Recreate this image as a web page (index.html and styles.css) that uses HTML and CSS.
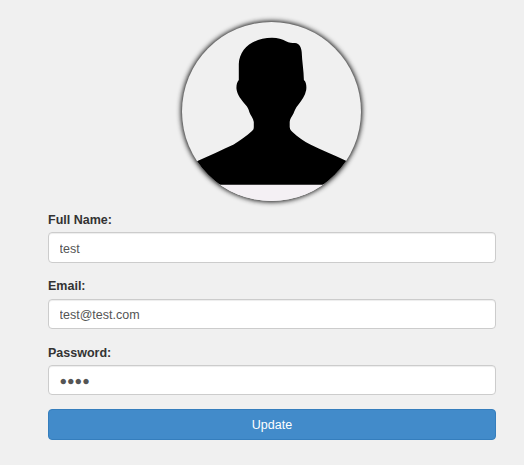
FILE: index.html
```html
<!DOCTYPE html>
<html lang="en">
<head>
<meta charset="utf-8">
<title>Profile</title>
<link rel="stylesheet" href="styles.css">
</head>
<body>
<form class="profile">
  <svg class="avatar" viewBox="182 22 179 179" aria-hidden="true">
    <rect class="avatar-base" x="182" y="184" width="180" height="18"/>
    <path d="M272 37.7C278 37.7 282 39.2 286 41.2C289 42.8 292 42.7 295 43.1C299.5 43.6 301.3 47.5 301.7 52C302 61 303.8 71 303.9 80C306.2 82 306.7 86 306.2 90C305 96 302 100 298.3 104.7C295.5 108 294.8 110.5 293.5 113.5C291.5 117 289.8 119 289.7 122V127C290 129.5 291 130.5 292.5 132C298 137 304 141.5 310.3 144.6C321 149.7 334 155.2 346 160.8L374 184.8H168L198 160.8C210 155 222 150 233.7 144.4C240.5 140.5 246.5 136 251.7 131.3C253.3 130 253.8 129 253.8 127V122C253.3 118 250.5 115.5 249.3 112C248.7 109 247.5 107 245.7 105C241 99.5 237.3 95 236.5 89C236.2 85 237 82 238.8 80V64C239.3 48 254 37.7 272 37.7Z"/>
  </svg>
  <label for="name">Full Name:</label>
  <input class="field field-name" id="name" type="text" value="test">
  <label for="email">Email:</label>
  <input class="field" id="email" type="text" value="test@test.com">
  <label class="label-password" for="password">Password:</label>
  <input class="field" id="password" type="text" value="●●●●">
  <button class="update" type="button">Update</button>
</form>
</body>
</html>
```
FILE: styles.css
```css
* {
  box-sizing: border-box;
}

body {
  margin: 0;
  padding: 22px 28px 0 48px;
  background: #f0f0f0;
  color: #333;
  font: 12.5px/18px "Liberation Sans", Arial, sans-serif;
}

.profile {
  display: flex;
  flex-direction: column;
}

.avatar {
  width: 179px;
  height: 179px;
  align-self: center;
  margin: 0 1px 9.5px 0;
  border-radius: 50%;
  box-shadow: 0 0 5px 1px #111;
}

.avatar-base {
  fill: #f4f0f4;
}

label {
  height: 18px;
  padding-top: 0.2px;
  margin-bottom: 3.8px;
  font-weight: bold;
}

.label-password {
  padding-top: 0.8px;
}

.field {
  width: 100%;
  height: 30.4px;
  margin: 0 0 14.1px;
  padding: 2px 10.5px 0;
  border: 1px solid #ccc;
  border-radius: 4px;
  background: #fff;
  box-shadow: inset 0 1px 1px rgba(0, 0, 0, 0.075);
  color: #555;
  font: inherit;
}

.field-name {
  padding-top: 3px;
}

.update {
  height: 31px;
  margin-top: -0.5px;
  padding: 1px 0 0;
  border: 1px solid #357ebd;
  border-radius: 4px;
  background: #428bca;
  color: #fff;
  font: inherit;
}
```
